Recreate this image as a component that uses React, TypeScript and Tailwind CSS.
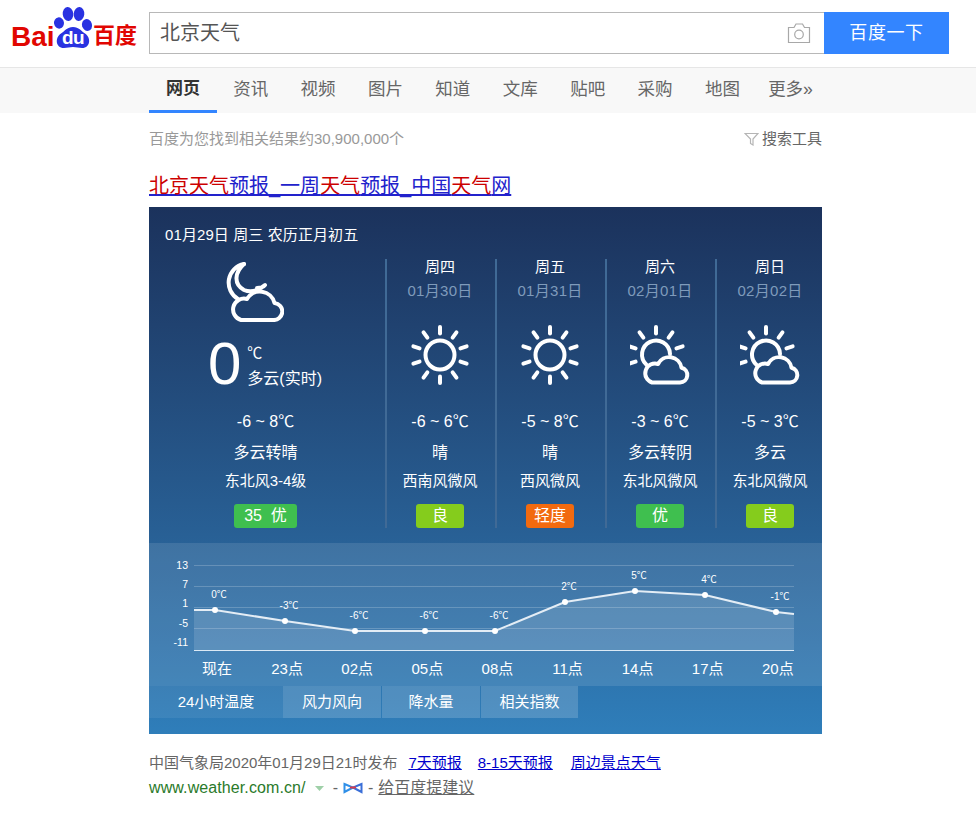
const FONT = '"Liberation Sans","Noto Sans CJK SC",sans-serif';

const rays = (cx: number, cy: number, angles: number[]) =>
  angles.map((a) => {
    const r = (a * Math.PI) / 180;
    const s = Math.sin(r);
    const c = Math.cos(r);
    return (
      <line
        key={a}
        x1={cx + s * 21.5}
        y1={cy - c * 21.5}
        x2={cx + s * 28}
        y2={cy - c * 28}
      />
    );
  });

function Sun() {
  return (
    <svg width="60" height="60" viewBox="0 0 60 60" fill="none" stroke="#fff" strokeWidth="4" strokeLinecap="round">
      <circle cx="30" cy="30" r="14.5" />
      {rays(30, 30, [0, 36, 72, 108, 144, 180, 216, 252, 288, 324])}
    </svg>
  );
}

function SunCloud() {
  return (
    <svg width="60" height="60" viewBox="0 0 60 60" fill="none" stroke="#fff" strokeWidth="4" strokeLinecap="round" strokeLinejoin="round">
      <path d="M16.7 40A14 14 0 1 1 40 29" />
      {rays(26, 30, [0, 36, 72, 252, 288, 324])}
      <path d="M22 57.5H50A7.5 7.5 0 0 0 51.5 42.7A12.5 12.5 0 0 0 28 39A9.5 9.5 0 0 0 22 57.5Z" />
    </svg>
  );
}

function MoonCloud() {
  return (
    <svg width="60" height="60" viewBox="0 0 60 60" fill="none" stroke="#fff" strokeWidth="4" strokeLinecap="round" strokeLinejoin="round">
      <path d="M20 2A19 19 0 0 0 14 37" />
      <path d="M20 2C11 10 9 22 20 28C27 31 35 28 41 23C39 25.5 36 26 33 26" />
      <path d="M17 58H49A8.5 8.5 0 0 0 50.5 41A15 15 0 0 0 23 37A10.5 10.5 0 0 0 17 58Z" />
    </svg>
  );
}

function Logo() {
  return (
    <div className="relative w-[128px] h-[46px] ml-[11px] mt-[5px] shrink-0">
      <svg className="absolute left-[36px] top-0" width="56" height="46" viewBox="0 0 56 46">
        <g fill="#2932e1">
          <ellipse cx="12" cy="18" rx="5" ry="5.7" transform="rotate(-10 12 18)" />
          <ellipse cx="21" cy="9" rx="5.3" ry="7" transform="rotate(-6 21 9)" />
          <ellipse cx="32" cy="9" rx="5.3" ry="7" transform="rotate(6 32 9)" />
          <ellipse cx="40" cy="20" rx="5" ry="6" transform="rotate(-15 40 20)" />
          <path d="M26 22C20 22 18 26 14 28.5C8 32 8 43 17 43C20 43 23 42 26 42C29 42 32 43 35 43C44 43 44 32 38 28.5C34 26 32 22 26 22Z" />
        </g>
      </svg>
      <span className="absolute left-0 top-[18px] text-[28px] leading-[28px] font-bold text-[#e10601]">Bai</span>
      <span className="absolute left-[51px] top-[23px] text-[19px] leading-[20px] font-bold text-white tracking-[-0.5px]">du</span>
      <span className="absolute left-[82px] top-[18px] text-[22px] leading-[26px] font-bold text-[#e10601] whitespace-nowrap">百度</span>
    </div>
  );
}

const days = [
  { d: "周四", date: "01月30日", icon: "sun", t: "-6 ~ 6℃", w: "晴", wind: "西南风微风", q: "良", c: "bg-[#85cc1c]" },
  { d: "周五", date: "01月31日", icon: "sun", t: "-5 ~ 8℃", w: "晴", wind: "西风微风", q: "轻度", c: "bg-[#f26a0f]" },
  { d: "周六", date: "02月01日", icon: "cloud", t: "-3 ~ 6℃", w: "多云转阴", wind: "东北风微风", q: "优", c: "bg-[#3fbf4f]" },
  { d: "周日", date: "02月02日", icon: "cloud", t: "-5 ~ 3℃", w: "多云", wind: "东北风微风", q: "良", c: "bg-[#85cc1c]" },
];

function Lower({ t, w, wind, badge, cls, bw }: { t: string; w: string; wind: string; badge: string; cls: string; bw: string }) {
  return (
    <>
      <div className="mt-[28px] h-[18px] leading-[18px] text-[16px] text-white whitespace-nowrap">{t}</div>
      <div className="mt-[12px] h-[20px] leading-[20px] text-[16px] text-white whitespace-nowrap">{w}</div>
      <div className="mt-[9px] h-[18px] leading-[18px] text-[15px] text-white whitespace-nowrap">{wind}</div>
      <div className={`mt-[14px] h-[24px] leading-[24px] text-[16px] text-white text-center rounded-[3px] whitespace-pre ${cls} ${bw}`}>{badge}</div>
    </>
  );
}

const labels = ["0℃", "-3℃", "-6℃", "-6℃", "-6℃", "2℃", "5℃", "4℃", "-1℃"];
const hours = ["现在", "23点", "02点", "05点", "08点", "11点", "14点", "17点", "20点"];

function Chart() {
  const pts = [[45, 67], [66, 67], [136, 78], [206, 88], [276, 88], [346, 88], [416, 59], [486, 48], [556, 52], [627, 69], [645, 71]];
  const dots = pts.slice(1, 10);
  const line = pts.map((p) => p.join(",")).join(" ");
  return (
    <svg width="673" height="143" viewBox="0 0 673 143" className="block">
      <polygon points={`${line} 645,107 45,107`} fill="#fff" fillOpacity="0.13" />
      {[22, 43, 64, 85].map((y) => (
        <line key={y} x1="45" x2="645" y1={y + 0.5} y2={y + 0.5} stroke="#fff" strokeOpacity="0.2" strokeWidth="1" />
      ))}
      <line x1="45" x2="645" y1="107.5" y2="107.5" stroke="#dbe9f5" strokeWidth="1" />
      <polyline points={line} fill="none" stroke="#e4edf5" strokeWidth="2" />
      {dots.map((p, i) => (
        <circle key={i} cx={p[0]} cy={p[1]} r="3" fill="#fff" />
      ))}
      {[["13", 22], ["7", 41], ["1", 60], ["-5", 80], ["-11", 99]].map(([t, y]) => (
        <text key={t} x="39" y={Number(y) + 4} textAnchor="end" fontSize="10.5" fill="#fff" fontFamily={FONT}>{t}</text>
      ))}
      {dots.map((p, i) => (
        <text key={i} x={p[0] + 4} y={p[1] - 12} textAnchor="middle" fontSize="10" fill="#fff" fontFamily={FONT}>{labels[i]}</text>
      ))}
      {hours.map((h, i) => (
        <text key={h} x={68 + i * 70.1} y="131" textAnchor="middle" fontSize="15" fill="#fff" fontFamily={FONT}>{h}</text>
      ))}
    </svg>
  );
}

export default function App() {
  return (
    <div className="w-[976px] h-[815px] overflow-hidden bg-white" style={{ fontFamily: FONT }}>
      <header className="flex h-[68px] border-b border-[#e6e6e6]">
        <Logo />
        <div className="ml-[10px] mt-[12px] flex h-[42px]">
          <div className="relative w-[675px] h-[42px] border border-[#b8b8b8] border-r-0 pl-[10px] text-[20px] leading-[40px] text-[#555]">
            北京天气
            <svg className="absolute right-[13px] top-[9px]" width="24" height="22" viewBox="0 0 24 22" fill="none" stroke="#a8a8a8" strokeWidth="1.2">
              <path d="M1.5 5.5H7L9 2H15.5L17.5 5.5H22.5V20.5H1.5Z" />
              <circle cx="12" cy="12.5" r="4.3" />
            </svg>
          </div>
          <button className="w-[125px] h-[42px] bg-[#3385ff] text-white text-[18px] tracking-[0.6px]">百度一下</button>
        </div>
      </header>

      <nav className="h-[45px] bg-[#f8f8f8] pl-[149px] flex">
        {["网页", "资讯", "视频", "图片", "知道", "文库", "贴吧", "采购", "地图"].map((t, i) => (
          <div
            key={t}
            className={
              i === 0
                ? "w-[68px] h-[45px] text-center leading-[42px] text-[17px] font-bold text-[#333] border-b-[3px] border-[#3385ff]"
                : "w-[67.4px] h-[45px] text-center leading-[42px] text-[17.5px] text-[#666]"
            }
          >
            {t}
          </div>
        ))}
        <div className="ml-[12px] leading-[42px] text-[17.5px] text-[#666]">更多»</div>
      </nav>

      <main className="w-[673px] ml-[149px]">
        <div className="flex justify-between items-center h-[18px] mt-[17px] text-[15px] text-[#999]">
          <span>百度为您找到相关结果约30,900,000个</span>
          <span className="flex items-center text-[#666]">
            <svg className="mr-[3px]" width="15" height="14" viewBox="0 0 15 14" fill="none" stroke="#b5b5b5" strokeWidth="1.2">
              <path d="M1 1.5H14L9 7V13L6.5 11.5V7Z" />
            </svg>
            搜索工具
          </span>
        </div>

        <a className="block mt-[28px] h-[21px] leading-[21px] text-[20px] text-[#2222cc] underline whitespace-nowrap">
          <span className="text-[#cc0000]">北京天气</span>预报_一周<span className="text-[#cc0000]">天气</span>预报_中国<span className="text-[#cc0000]">天气</span>网
        </a>

        <section className="mt-[10px] h-[527px] bg-gradient-to-b from-[#1b325c] to-[#2f7eba] text-white overflow-hidden">
          <div className="h-[52px] pl-[16px] pt-[19px] text-[15px] leading-[18px] tracking-[0.1px]">01月29日 周三 农历正月初五</div>
          <div className="flex h-[269px]">
            <div className="w-[236px] shrink-0 flex flex-col items-center pr-[3px]">
              <div className="mt-[3px] ml-[-24px]"><MoonCloud /></div>
              <div className="flex h-[63px] ml-[-1px]">
                <span className="text-[60px] leading-[64px] mt-[10px]">0</span>
                <div className="ml-[6px] pt-[22px]">
                  <div className="text-[15px] leading-[18px]">℃</div>
                  <div className="mt-[8px] text-[16px] leading-[18px] whitespace-nowrap">多云(实时)</div>
                </div>
              </div>
              <Lower t="-6 ~ 8℃" w="多云转晴" wind="东北风3-4级" badge="35  优" cls="bg-[#3fbf4f]" bw="w-[63px]" />
            </div>
            {days.map((x) => (
              <div key={x.d} className="w-[110px] shrink-0 border-l-2 border-[#406a96] flex flex-col items-center pr-[2px]">
                <div className="h-[16px] leading-[16px] text-[15px]">{x.d}</div>
                <div className="mt-[7px] h-[18px] leading-[18px] text-[15px] tracking-[0.3px] text-[#7f9bbb]">{x.date}</div>
                <div className="mt-[25px] h-[60px]">{x.icon === "sun" ? <Sun /> : <SunCloud />}</div>
                <Lower t={x.t} w={x.w} wind={x.wind} badge={x.q} cls={x.c} bw="w-[48px]" />
              </div>
            ))}
          </div>
          <div className="mt-[15px] h-[143px] bg-[#ffffff1c]"><Chart /></div>
          <div className="flex h-[32px]">
            <div className="w-[134px] bg-[#ffffff12] text-center text-[15px] leading-[32px]">24小时温度</div>
            {[
              ["风力风向", "w-[98px]"],
              ["降水量", "w-[98px]"],
              ["相关指数", "w-[97px]"],
            ].map(([t, w]) => (
              <div key={t} className={`${w} mr-[1px] bg-[#ffffff2b] text-center text-[15px] leading-[32px]`}>{t}</div>
            ))}
          </div>
        </section>

        <div className="mt-[20px] h-[18px] leading-[18px] text-[15px] text-[#666] whitespace-nowrap">
          中国气象局2020年01月29日21时发布
          <a className="ml-[11px] text-[#0000cc] underline">7天预报</a>
          <a className="ml-[16px] text-[#0000cc] underline">8-15天预报</a>
          <a className="ml-[18px] text-[#0000cc] underline">周边景点天气</a>
        </div>
        <div className="mt-[7px] h-[18px] leading-[18px] flex items-center text-[16px] text-[#666] whitespace-nowrap">
          <span className="text-[#2a7a2a] tracking-[0.1px]">www.weather.com.cn/</span>
          <svg className="ml-[8px]" width="11" height="7" viewBox="0 0 11 7"><path d="M1 1H10L5.5 6Z" fill="#9fd0a8" /></svg>
          <span className="ml-[8px]">-</span>
          <svg className="ml-[5px]" width="20" height="12" viewBox="0 0 20 12" fill="none">
            <path d="M1.5 2L10 5.5L1.5 10Z" stroke="#2f8fe8" strokeWidth="2" />
            <path d="M18.5 2L10 5.5L18.5 10Z" stroke="#3a6fd8" strokeWidth="2" />
            <path d="M7 5.5H13" stroke="#d83a4a" strokeWidth="2" />
          </svg>
          <span className="ml-[5px]">-</span>
          <span className="ml-[5px] underline">给百度提建议</span>
        </div>
      </main>
    </div>
  );
}
